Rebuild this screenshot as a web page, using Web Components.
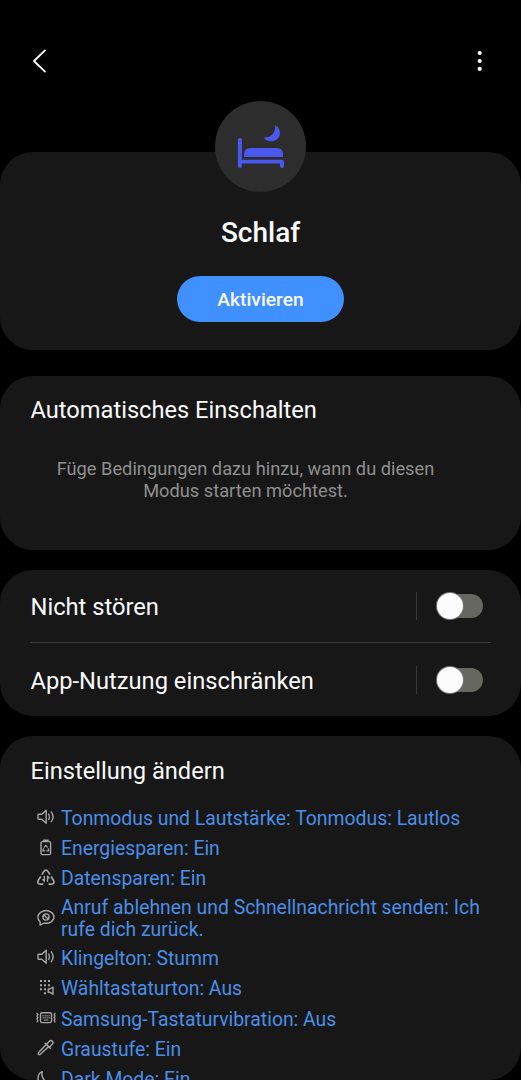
<!DOCTYPE html>
<html lang="de">
<head>
<meta charset="utf-8">
<title>Schlaf</title>
<style>
    html, body {
        margin: 0;
        height: 1080px;
        overflow: hidden;
        background: #000;
    }
    body {
        font-family: Roboto, "Noto Sans", sans-serif;
        color: #fafafa;
    }
</style>
</head>
<body>
<mode-page>
    <mode-header slot="header"></mode-header>
    <mode-hero name="Schlaf" action="Aktivieren"></mode-hero>
    <mode-card class="auto" heading="Automatisches Einschalten">
        <mode-hint>Füge Bedingungen dazu hinzu, wann du diesen Modus starten möchtest.</mode-hint>
    </mode-card>
    <mode-card class="switches">
        <mode-switch>Nicht stören</mode-switch>
        <mode-switch>App-Nutzung einschränken</mode-switch>
    </mode-card>
    <mode-card class="settings" heading="Einstellung ändern">
        <mode-setting icon="sound">Tonmodus und Lautstärke: Tonmodus: Lautlos</mode-setting>
        <mode-setting icon="battery">Energiesparen: Ein</mode-setting>
        <mode-setting icon="data">Datensparen: Ein</mode-setting>
        <mode-setting icon="reject">Anruf ablehnen und Schnellnachricht senden: Ich rufe dich zurück.</mode-setting>
        <mode-setting icon="sound">Klingelton: Stumm</mode-setting>
        <mode-setting icon="dialpad">Wähltastaturton: Aus</mode-setting>
        <mode-setting icon="keyboard">Samsung-Tastaturvibration: Aus</mode-setting>
        <mode-setting icon="picker">Graustufe: Ein</mode-setting>
        <mode-setting icon="moon">Dark Mode: Ein</mode-setting>
    </mode-card>
</mode-page>

<script>
const icons = {
    sound: `<path d="M2.600 7.200h3.200l4.400-4v13l-4.400-4H2.600a.6.6 0 0 1-.6-.6V7.800a.6.6 0 0 1 .6-.6z"/><path d="M12.700 7q1.600 2.700 0 5.400M15.300 4.800q3.600 4.900 0 9.800"/>`,
    battery: `<rect x="5" y="3.600" width="9.600" height="13" rx="1.400"/><path d="M7.700 2.600h4.200" stroke-width="2"/><path d="M8.300 9.200 9.800 7.300l1.500 1.900M7.400 10.600l-.6 2.200h2M12.200 10.600l.6 2.200h-2" stroke-width="1.200"/>`,
    data: `<path d="M6.200 6.100 7.500 4q2.400-3.600 4.800 0l1.300 2.100M4.400 9l-2 3.200q-1.700 3.700 2 3.900h2.300M15.400 9l2 3.200q1.700 3.700-2 3.900h-2.300" stroke-width="1.700"/><path d="M8.300 8.300v4.700M6.900 11.500l1.400 1.700M11.500 13.200V8.500M11.500 8.300l1.500 1.700" stroke-width="1.400"/>`,
    reject: `<path d="M4.1 17.1v-3.3C.5 10.5 1.7 6.3 4.9 4.2c3.1-2 7.2-2 10.2 0 3.8 2.5 3.8 7.2 0 9.7-2 1.3-4.6 1.7-7 1.1z"/><circle cx="10" cy="9" r="3.1"/><path d="m8 7 4 4"/>`,
    dialpad: `<g fill="currentColor" stroke="none"><path d="M4 2.100h2V4H4zM8 2.100h2V4H8zM12 2.100h2V4h-2zM4 6.200h2v2H4zM8 6.200h2v2H8zM12 6.200h2v2h-2zM4 10.200h2v2H4zM8 10.200h2v2H8zM8 14.300h2v2H8z"/></g><path d="M12.200 11h1.600l3.200-2v7.200l-3.200-2h-1.600z"/>`,
    keyboard: `<rect x="4.500" y="4.800" width="11" height="9.800" rx="1.600"/><path d="M6.600 7.800h7M6.600 9.800h7" stroke-dasharray="1 1" stroke-linecap="butt"/><path d="M8.200 12h3.800" stroke-width="1.200"/><path d="m1 5.300.9 1.400-.9 1.500.9 1.500-.9 1.500.9 1.400-.9 1.400M19 5.300l-.9 1.400.9 1.500-.9 1.500.9 1.500-.9 1.400.9 1.400" stroke-width="1.300"/>`,
    picker: `<path d="m10 6.7-7.4 7.8q-1.3 2.9 1.7 1.8l8-7.3"/><path d="m9.1 5.3 5.2 5M10.4 6.5l3-3.3c2-1.9 4.8.8 2.9 2.9l-3.1 3.3"/>`,
    moon: `<path d="M6.3 2.6C.9 4.6.7 12.4 5.4 15.6c4.1 2.9 9.2 1.2 11.4-2.4C9.2 14.4 4.4 9 6.3 2.6z"/>`
};

class ModePage extends HTMLElement {
    constructor() {
        super();
        this.attachShadow({ mode: "open" });
    }
    connectedCallback() {
        this.shadowRoot.innerHTML = `
            <style>
                :host {
                    display: flex;
                    flex-direction: column;
                    height: 1080px;
                    overflow: hidden;
                }
                main {
                    display: flex;
                    flex-direction: column;
                }
            </style>
            <slot name="header"></slot>
            <main><slot></slot></main>
        `;
    }
}

class ModeHeader extends HTMLElement {
    constructor() {
        super();
        this.attachShadow({ mode: "open" });
    }
    connectedCallback() {
        this.shadowRoot.innerHTML = `
            <style>
                :host {
                    display: flex;
                    flex: none;
                    box-sizing: border-box;
                    height: 152px;
                    padding: 46px 26px 0 24px;
                    justify-content: space-between;
                    align-items: flex-start;
                }
                svg {
                    display: block;
                }
            </style>
            <svg width="30" height="30" viewBox="0 0 30 30" fill="none" stroke="#fff" stroke-width="1.8" stroke-linecap="round" stroke-linejoin="round"><path d="M21 4.4 10 15l11 10.6"/></svg>
            <svg width="30" height="30" viewBox="0 0 30 30" fill="#fff"><circle cx="14.7" cy="7" r="2.1"/><circle cx="14.7" cy="15" r="2.1"/><circle cx="14.7" cy="22.9" r="2.1"/></svg>
        `;
    }
}

class ModeHero extends HTMLElement {
    constructor() {
        super();
        this.attachShadow({ mode: "open" });
    }
    connectedCallback() {
        this.shadowRoot.innerHTML = `
            <style>
                :host {
                    display: flex;
                    flex: none;
                    flex-direction: column;
                    align-items: center;
                    height: 198px;
                    margin-bottom: 26px;
                    border-radius: 33px;
                    background: #171717;
                }
                svg {
                    flex: none;
                    margin-top: -51px;
                }
                h1 {
                    margin: 23px 0 0;
                    font-size: 28px;
                    line-height: 36px;
                    font-weight: 500;
                }
                button {
                    width: 167px;
                    height: 46px;
                    margin-top: 25px;
                    padding: 1px 0 0;
                    border: none;
                    border-radius: 23px;
                    background: #4090ff;
                    color: #fafafa;
                    font: 500 19.200px Roboto, sans-serif;
                }
            </style>
            <svg width="91" height="91" viewBox="0 0 91 91" fill="#4a58ee">
                <circle cx="45.5" cy="45.5" r="45.5" fill="#2d2d2d"/>
                <path d="M60 24c7.400 4.200 6.300 14.300-1.500 16.100-3.900.9-7.600-.6-9.800-3.700C55.800 37.200 61.400 31 60 24z"/>
                <path d="M29 56v-2q0-7 6-7h27q6 0 6 7v2z"/>
                <path d="M22.900 39q0-1.900 2-1.900t2 1.900v19.800H67q2 0 2 2V65q0 2-2 2t-2-2v-2.500H26.900V65q0 2-2 2t-2-2z"/>
            </svg>
            <h1>${this.getAttribute("name")}</h1>
            <button>${this.getAttribute("action")}</button>
        `;
    }
}

class ModeCard extends HTMLElement {
    constructor() {
        super();
        this.attachShadow({ mode: "open" });
    }
    connectedCallback() {
        let heading = "";
        if (this.hasAttribute("heading")) {
            heading = `<h2>${this.getAttribute("heading")}</h2>`;
        }

        this.shadowRoot.innerHTML = `
            <style>
                :host {
                    display: block;
                    flex: none;
                    box-sizing: border-box;
                    padding: 0 30px;
                    border-radius: 33px;
                    background: #171717;
                }
                :host(.auto) {
                    height: 174px;
                    margin-bottom: 20px;
                }
                :host(.switches) {
                    height: 146px;
                    margin-bottom: 20px;
                }
                :host(.settings) {
                    height: 344px;
                    overflow: hidden;
                }
                h2 {
                    margin: 0;
                    padding: 17px 0 0 .5px;
                    font-size: 23.650px;
                    line-height: 34px;
                    font-weight: 400;
                }
                :host(.settings) h2 {
                    padding: 18px 0 16px .5px;
                }
            </style>
            ${heading}
            <slot></slot>
        `;
    }
}

class ModeHint extends HTMLElement {
    constructor() {
        super();
        this.attachShadow({ mode: "open" });
    }
    connectedCallback() {
        this.shadowRoot.innerHTML = `
            <style>
                :host {
                    display: block;
                    width: 390px;
                    margin: 31px 0 0 20.500px;
                    color: #8f8f8f;
                    font-size: 18.250px;
                    line-height: 21.500px;
                    text-align: center;
                }
            </style>
            <slot></slot>
        `;
    }
}

class ModeSwitch extends HTMLElement {
    constructor() {
        super();
        this.attachShadow({ mode: "open" });
    }
    connectedCallback() {
        this.shadowRoot.innerHTML = `
            <style>
                :host {
                    display: flex;
                    box-sizing: border-box;
                    height: 73px;
                    align-items: center;
                    font-size: 23.700px;
                }
                :host(:not(:last-of-type)) {
                    border-bottom: 1px solid #3a3a3a;
                }
                .label {
                    flex: 1;
                    padding: 2px 0 0 .5px;
                }
                .divider {
                    width: 1px;
                    height: 28px;
                    margin-right: 20px;
                    background: #3a3a3a;
                }
                .track {
                    width: 46px;
                    height: 24px;
                    margin-right: 8px;
                    border-radius: 12px;
                    background: #66675f;
                }
                .thumb {
                    width: 26px;
                    height: 26px;
                    margin: -1px 0 0 -.5px;
                    border-radius: 50%;
                    background: #fcfcfc;
                    box-shadow: 0 0 0 1px #777;
                }
            </style>
            <span class="label"><slot></slot></span>
            <span class="divider"></span>
            <div class="track"><div class="thumb"></div></div>
        `;
    }
}

class ModeSetting extends HTMLElement {
    constructor() {
        super();
        this.attachShadow({ mode: "open" });
    }
    connectedCallback() {
        this.shadowRoot.innerHTML = `
            <style>
                :host {
                    display: flex;
                    box-sizing: border-box;
                    min-height: 30.300px;
                    padding: 2px 0;
                    align-items: center;
                    color: #4b8ee8;
                    font-size: 19.380px;
                    line-height: 22.600px;
                }
                svg {
                    flex: none;
                    margin: 0 5.300px 3.500px 5.700px;
                    color: #a6a6a6;
                }
            </style>
            <svg width="20" height="20" viewBox="0 0 20 20" fill="none" stroke="currentColor" stroke-width="1.400" stroke-linecap="round" stroke-linejoin="round">${icons[this.getAttribute("icon")]}</svg>
            <span><slot></slot></span>
        `;
    }
}

window.customElements.define("mode-page", ModePage);
window.customElements.define("mode-header", ModeHeader);
window.customElements.define("mode-hero", ModeHero);
window.customElements.define("mode-card", ModeCard);
window.customElements.define("mode-hint", ModeHint);
window.customElements.define("mode-switch", ModeSwitch);
window.customElements.define("mode-setting", ModeSetting);
</script>
</body>
</html>
